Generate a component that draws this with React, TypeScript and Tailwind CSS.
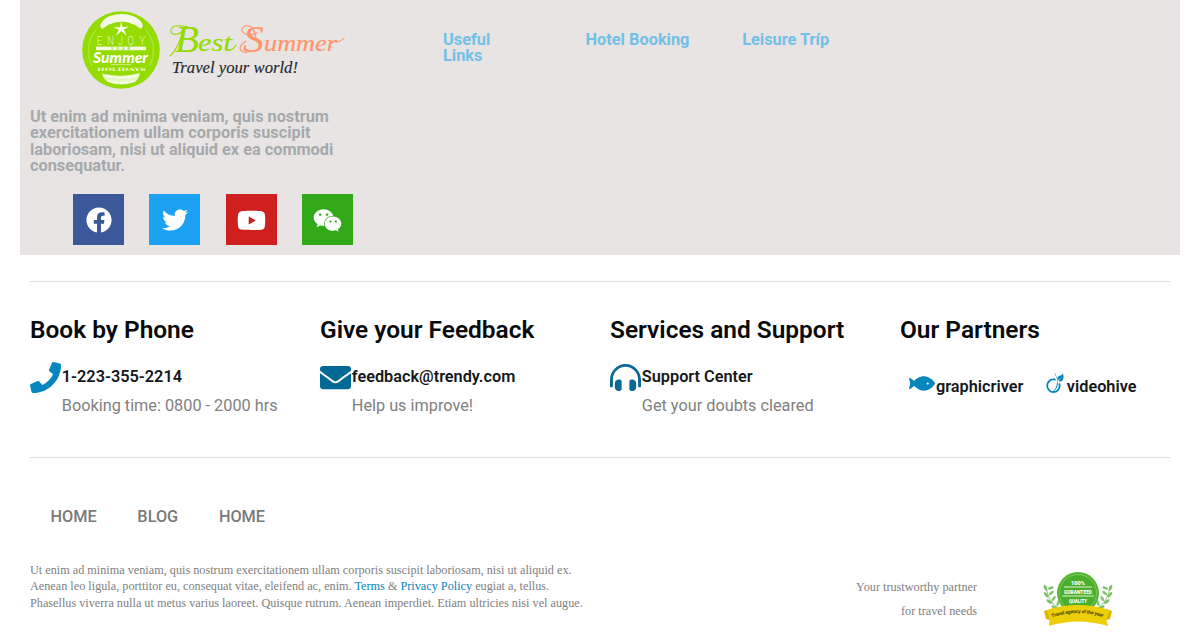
import type { ReactNode } from 'react';
import {
  FaEnvelope,
  FaFacebook,
  FaFish,
  FaHeadphonesAlt,
  FaPhone,
  FaTwitter,
  FaViadeo,
  FaWeixin,
  FaYoutube,
} from 'react-icons/fa';

const leaves = [
  [0, 0, 20],
  [-5, -5, 35],
  [-8, -11, 50],
  [-9, -17, 70],
];

function SummerBadge() {
  return (
    <svg className="h-[78px] w-[78px]" viewBox="0 0 78 78">
      <circle cx="39" cy="39" r="38.8" fill="#94db00" />
      <path d="M10 55A33 33 0 0 1 14 19M68 55A33 33 0 0 0 64 19" fill="none" stroke="#c6ee70" strokeWidth="0.7" />
      <path d="M18 15Q20 8 28 5Q40 1 51 5Q59 8 61 15L59 18L53 14Q40 7 26 14L20 18Z" fill="#f5f8e8" />
      <path d="M39.2 11L40.4 16.4L46 15.8L41.4 18.8L44.6 24L39.4 20L34.2 24.2L37 18.8L32.4 16.2L38.2 16.4Z" fill="#fff" stroke="#fff" strokeWidth="0.3" />
      <g transform="scale(.7 1)">
        <text x="21 36 51 65 82" y="34.2" fill="#e4f7b8" fontFamily="Roboto, sans-serif" fontSize="13.5" fontWeight="300">ENJOY</text>
      </g>
      <rect x="14" y="35.6" width="50" height="3.6" fill="#f3fadf" />
      <text x="29" y="38.8" fill="#8fd010" fontFamily="Liberation Sans, sans-serif" fontSize="3.6" fontWeight="700" textLength="19">YOUR</text>
      <text x="11" y="51.5" fill="#fff" fontFamily="Lato, sans-serif" fontSize="15.5" fontStyle="italic" fontWeight="900" textLength="55" lengthAdjust="spacingAndGlyphs">Summer</text>
      <path d="M29 53.6H49" stroke="#d9f3a0" strokeWidth="0.8" />
      <text x="15" y="59.6" fill="#eefad0" fontFamily="DejaVu Serif, serif" fontSize="4.6" fontWeight="700" textLength="49" lengthAdjust="spacingAndGlyphs">HOLIDAYS</text>
      <path d="M20 62.5Q39 67 58 62Q57 68 53 71Q39 76 26 71Q21 68 20 62.5Z" fill="#e6f6c4" />
      <path d="M22 64.5Q39 69 56 64.5M26 69.5Q39 74 53 69.5" fill="none" stroke="#fff" strokeDasharray="2 1" strokeWidth="1.6" />
    </svg>
  );
}

function Wordmark() {
  return (
    <svg className="h-[60px] w-[180px]" viewBox="0 0 180 60">
      <g fontFamily="Liberation Serif, serif" fontStyle="italic">
        <text x="6" y="31.5" fill="#94db00" fontSize="38" textLength="24" lengthAdjust="spacingAndGlyphs">B</text>
        <text x="29" y="31" fill="#94db00" stroke="#94db00" strokeWidth="0.2" fontSize="26" textLength="34" lengthAdjust="spacingAndGlyphs">est</text>
        <text x="74" y="31.5" fill="#ff956b" fontSize="38" textLength="21" lengthAdjust="spacingAndGlyphs">S</text>
        <text x="95" y="31" fill="#ff956b" stroke="#ff956b" strokeWidth="0.2" fontSize="23" textLength="73" lengthAdjust="spacingAndGlyphs">ummer</text>
      </g>
      <path d="M16 9C6 19 -1 13 3 8C6 4 14 6 19 7M1 36C6 32 10 24 14 12M60 30Q64 30 67 25" fill="none" stroke="#94db00" strokeWidth="1.1" strokeLinecap="round" />
      <path d="M88 13C76 18 68 10 76 6C84 4 87 14 87 19M77 21C66 28 72 35 82 31M164 21Q171 23 175 18" fill="none" stroke="#ff956b" strokeWidth="1.1" strokeLinecap="round" />
      <text x="3" y="53" fill="#25282b" fontFamily="Liberation Serif, serif" fontSize="17.5" fontStyle="italic" stroke="#25282b" strokeWidth="0.15" textLength="126" lengthAdjust="spacingAndGlyphs">Travel your world!</text>
    </svg>
  );
}

function Award() {
  return (
    <svg className="h-[56px] w-[72px]" viewBox="0 0 72 56">
      {[false, true].map((flip) => (
        <g key={String(flip)} transform={flip ? 'translate(72 0) scale(-1 1)' : undefined}>
          <path d="M18 38Q6 32 4 15" fill="none" stroke="#80bd68" strokeWidth="0.8" />
          {leaves.map(([x, y, angle]) => (
            <g key={y} transform={`translate(${15 + x} ${35 + y}) rotate(${angle})`}>
              <ellipse cx="-2" cy="2" rx="3.3" ry="1.4" fill="#7fc26b" />
              <ellipse cx="0" cy="-3" rx="1.3" ry="3" fill="#7fc26b" />
            </g>
          ))}
        </g>
      ))}
      <circle cx="36" cy="22" r="21" fill="#54b435" />
      <circle cx="36" cy="22" r="18.5" fill="#4bae2d" stroke="#83cf65" strokeWidth="0.8" />
      <path d="M22 16H50M20 25H52" stroke="#d9f3cc" strokeWidth="1" />
      <g fill="#fff" fontFamily="Roboto, sans-serif" fontWeight="900">
        <text x="29" y="13.5" fontSize="5.6" textLength="14">100%</text>
        <text x="22" y="22.8" fontSize="5.6" textLength="28" lengthAdjust="spacingAndGlyphs">GURANTEED</text>
        <text x="27" y="31.6" fontSize="5" textLength="18" lengthAdjust="spacingAndGlyphs">QUALITY</text>
      </g>
      <path d="M2 40L12 37L13 48L7 55L8 49L4 48ZM70 40L60 37L59 48L66 55L64 49L68 48Z" fill="#ddb600" />
      <path d="M5 39Q36 29 67 39L64 50L66 55Q36 46 7 55L8 50Z" fill="#edcf09" />
      <path id="ribbon" d="M10 46.5Q36 37.5 62 46.5" fill="none" />
      <text fill="#5d5410" fontFamily="Roboto, sans-serif" fontSize="5" fontWeight="900">
        <textPath href="#ribbon" textLength="52">Travel agency of the year</textPath>
      </text>
    </svg>
  );
}

function Contact({ title, label, note, icon }: { title: string; label: string; note: string; icon: ReactNode }) {
  return (
    <section className="w-[290px] shrink-0">
      <h2 className="text-[24.45px] leading-[30px] font-semibold text-[#080a0b]">{title}</h2>
      <div className="mt-[15px] flex">
        <div className="flex h-[34px] w-[31.8px] shrink-0 items-center">{icon}</div>
        <div className="whitespace-nowrap">
          <p className="pt-[5px] text-[16.3px] leading-[24px] font-semibold text-[#15181b]">{label}</p>
          <p className="mt-[5px] text-[16.28px] leading-[24px] font-normal text-[#808080]">{note}</p>
        </div>
      </div>
    </section>
  );
}

const socials = [
  { name: 'Facebook', color: 'bg-[#3b5998]', Icon: FaFacebook },
  { name: 'Twitter', color: 'bg-[#1da1f2]', Icon: FaTwitter },
  { name: 'YouTube', color: 'bg-[#cd201f]', Icon: FaYoutube },
  { name: 'WeChat', color: 'bg-[#31a918]', Icon: FaWeixin },
];

export default function App() {
  return (
    <footer className="h-[636px] overflow-hidden bg-white px-[20px] font-['Roboto',sans-serif]">
      <div className="flex h-[255px] w-[1160px] bg-[#e8e4e3] pl-[10px]">
        <div className="w-[413px] shrink-0">
          <div className="flex h-[109px] pt-[11px] pl-[52px]">
            <SummerBadge />
            <div className="pt-[9px] pl-[9px]"><Wordmark /></div>
          </div>
          <p className="w-[320px] text-[16.3px] leading-[16.28px] font-bold text-[#a5a9ab]">
            Ut enim ad minima veniam, quis nostrum<br />exercitationem ullam corporis suscipit<br />laboriosam, nisi ut aliquid ex ea commodi<br />consequatur.
          </p>
          <div className="mt-[20.3px] flex gap-[25.4px] pl-[43px]">
            {socials.map(({ name, color, Icon }) => (
              <a key={name} aria-label={name} className={`flex size-[51px] items-center justify-center pt-px text-white ${color}`}>
                <Icon className={name === 'YouTube' || name === 'WeChat' ? 'size-[29px]' : 'size-[26px]'} />
              </a>
            ))}
          </div>
        </div>
        <nav className="flex pt-[32px] text-[16.35px] leading-[16.28px] font-bold text-[#71c0e7]">
          <a className="w-[142.5px]">Useful<br />Links</a>
          <a className="w-[156.7px]">Hotel Booking</a>
          <a>Leisure Tríp</a>
        </nav>
      </div>
      <div className="mx-[10px] mt-[26px] flex h-[177px] border-y border-[#dedede] pt-[33px]">
        <Contact title="Book by Phone" label="1-223-355-2214" note="Booking time: 0800 - 2000 hrs" icon={<FaPhone className="size-[31px] text-[#0785bd]" />} />
        <Contact title="Give your Feedback" label="feedback@trendy.com" note="Help us improve!" icon={<FaEnvelope className="size-[31px] text-[#006996]" />} />
        <Contact title="Services and Support" label="Support Center" note="Get your doubts cleared" icon={<FaHeadphonesAlt className="size-[31px] text-[#096a95]" />} />
        <section>
          <h2 className="text-[24.45px] leading-[30px] font-semibold text-[#080a0b]">Our Partners</h2>
          <div className="mt-[27px] flex h-[30px] items-center text-[16.3px] font-semibold whitespace-nowrap text-[#15181b]">
            <FaFish className="mb-[7px] ml-[8.5px] h-[23px] w-[26px] text-[#0785bd]" />
            <span className="ml-[1.5px]">graphicriver</span>
            <FaViadeo className="mb-[8px] ml-[21.5px] h-[20px] w-[20px] text-[#0785bd]" />
            <span className="ml-[2px]">videohive</span>
          </div>
        </section>
      </div>
      <nav className="mt-[47px] flex gap-[40.7px] pl-[30.5px] text-[16.28px] leading-[24px] font-medium text-[#7a7a7a]">
        <a>HOME</a><a>BLOG</a><a>HOME</a>
      </nav>
      <div className="flex pl-[10px] font-['Liberation_Serif',serif] text-[12.23px] text-[#808080]">
        <p className="mt-[33px] w-[660px] shrink-0 leading-[16.3px] whitespace-nowrap">
          Ut enim ad minima veniam, quis nostrum exercitationem ullam corporis suscipit laboriosam, nisi ut aliquid ex.<br />
          Aenean leo ligula, porttitor eu, consequat vitae, eleifend ac, enim. <a className="text-[#0785bd]">Terms</a> &amp; <a className="text-[#0785bd]">Privacy Policy</a> eugiat a, tellus.<br />
          Phasellus viverra nulla ut metus varius laoreet. Quisque rutrum. Aenean imperdiet. Etiam ultricies nisi vel augue.
        </p>
        <p className="mt-[46px] w-[287px] text-right leading-[24.4px]">Your trustworthy partner<br />for travel needs</p>
        <div className="mt-[41.5px] ml-[65px]"><Award /></div>
      </div>
    </footer>
  );
}
